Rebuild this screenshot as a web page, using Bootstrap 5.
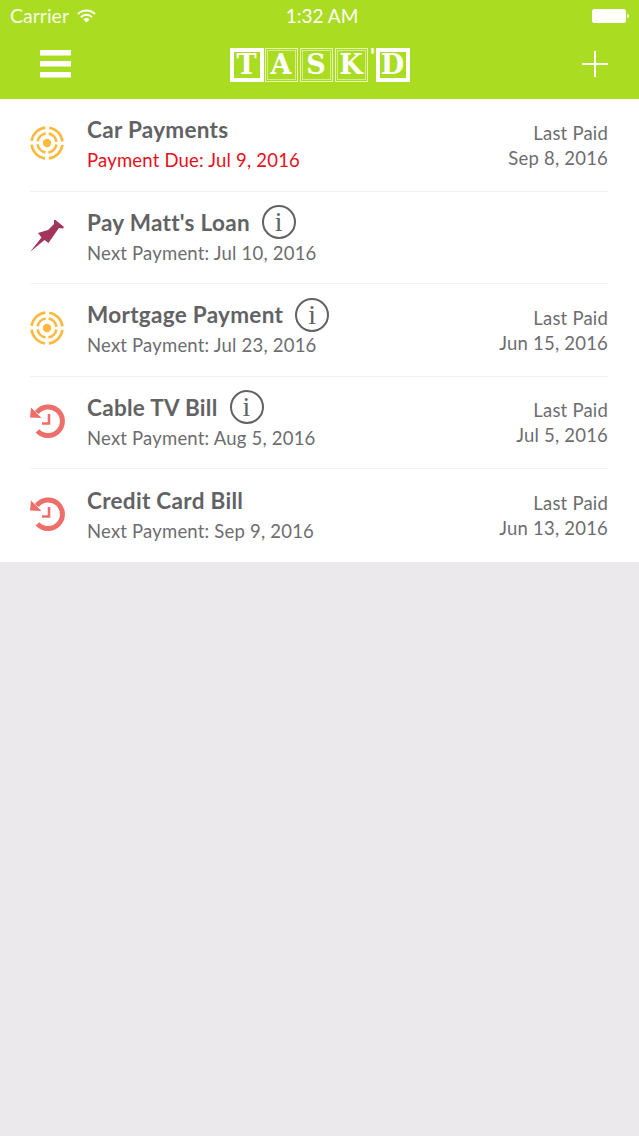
<!DOCTYPE html>
<html lang="en">
<head>
  <meta charset="UTF-8">
  <title>Task'd</title>
  <link href="https://cdn.jsdelivr.net/npm/bootstrap@5.3.0/dist/css/bootstrap.min.css" rel="stylesheet">
  <style>
    body { background: #ebe9eb; font-family: Lato, "Open Sans", sans-serif; color: #626265; min-height: 1136px; }
    .app-head { background: #aadc22; color: #fff; height: 99px; }
    .status-row { height: 32px; padding: 0 10px; font-size: 19px; }
    .status-row > div { flex: 1 1 0; }
    .status-time { text-align: center; padding-left: 5px; }
    .carrier { opacity: .9; font-size: 19.5px; }
    .bar-row { height: 67px; padding: 0 31px 4px 40px; }
    .bar-side { flex: 1 1 0; }
    .logo-box { display: flex; align-items: stretch; height: 34px; gap: 1px; margin: 2px 0 0 -9px; font-family: "DejaVu Serif", serif; font-weight: 700; color: #fff; }
    .tile { width: 33px; margin-right: 1px; border: 1px solid #e9f7b8; padding: 1px; overflow: hidden; }
    .tile span { display: flex; height: 100%; align-items: center; justify-content: center; border: 1px solid #d5ef8a; font-size: 27px; line-height: 1; }
    .tile-bold { width: 34px; padding: 0; border: 4px solid #fff; margin-right: 0; }
    .tile-bold span { border: 0; }
    .apos { width: 5px; font-size: 20px; line-height: 20px; margin-top: -2px; }
    .pay-list { background: #fff; height: 463px; --bs-list-group-color: #626265; }
    .pay-row { height: 92.5px; margin: 0 31px 0 30px; border-bottom: 1px solid #f2f2f3; background: transparent; padding: 0; }
    .pay-icon { width: 40px; margin: 0 20px 4px -3px; }
    .pay-body { padding-bottom: 4px; }
    .pay-title { font-size: 22.5px; font-weight: 700; line-height: 35px; height: 35px; letter-spacing: .3px; }
    .pay-sub { font-size: 18.5px; line-height: 26px; letter-spacing: .2px; color: #6d6d70; }
    .pay-due { color: #e8101c; }
    .pay-right { font-size: 18.5px; line-height: 25px; text-align: right; letter-spacing: .2px; padding-top: 2px; color: #6d6d70; }
    .info-dot { width: 34px; height: 34px; border: 2px solid #626265; border-radius: 50%; margin-left: 12px; font-family: "Liberation Serif", serif; font-weight: 400; font-size: 28px; line-height: 30px; text-align: center; }
  </style>
</head>
<body>

  <!-- Header -->
  <header class="app-head">
    <div class="status-row d-flex align-items-center">
      <div class="d-flex align-items-center gap-2">
        <span class="carrier">Carrier</span>
        <svg width="19" height="14" viewBox="0 0 19 14" fill="none" stroke="#fff" stroke-width="2">
          <path d="M1 5a12 12 0 0 1 17 0"/>
          <path d="M4 8.2a7.6 7.6 0 0 1 11 0"/>
          <path d="M9.5 13.5l-3-3a4.3 4.3 0 0 1 6 0z" fill="#fff" stroke="none"/>
        </svg>
      </div>
      <div class="status-time">1:32 AM</div>
      <div class="d-flex justify-content-end">
        <svg width="37" height="16" viewBox="0 0 37 16">
          <rect x="0" y="1" width="34" height="14" rx="2.5" fill="#fff"/>
          <rect x="35" y="6" width="2" height="4" rx="1" fill="#fff" opacity=".8"/>
        </svg>
      </div>
    </div>
    <nav class="bar-row d-flex align-items-center">
      <div class="bar-side">
        <svg class="d-block" width="31" height="28" viewBox="0 0 31 28" fill="#fff">
          <rect y="0" width="31" height="5.5"/>
          <rect y="11" width="31" height="5.5"/>
          <rect y="22" width="31" height="5.5"/>
        </svg>
      </div>
      <div class="logo-box">
        <div class="tile tile-bold"><span>T</span></div>
        <div class="tile"><span>A</span></div>
        <div class="tile"><span>S</span></div>
        <div class="tile"><span>K</span></div>
        <div class="apos">'</div>
        <div class="tile tile-bold"><span>D</span></div>
      </div>
      <div class="bar-side d-flex justify-content-end">
        <svg width="26" height="26" viewBox="0 0 26 26" stroke="#fff" stroke-width="2">
          <path d="M13 0v26M0 13h26"/>
        </svg>
      </div>
    </nav>
  </header>

  <!-- Icons -->
  <svg width="0" height="0" class="position-absolute">
    <defs>
      <symbol id="ico-target" viewBox="0 0 40 40">
        <g fill="none" stroke="#fbb93e" stroke-width="2.6">
          <circle cx="20" cy="20" r="15.5" stroke-dasharray="20.3 4" stroke-dashoffset="-2"/>
          <circle cx="20" cy="20" r="9.5" stroke-dasharray="11.9 3" stroke-dashoffset="-1.5"/>
        </g>
        <circle cx="20" cy="20" r="4.2" fill="#fbb93e"/>
      </symbol>
      <symbol id="ico-pin" viewBox="0 0 40 40">
        <path fill="#a3345c" d="M3 37L14.500 22.500 11 18 21 15 27 9 27 5 28.500 5 37 12 36 13.500 32 13 27 20 21.500 28 17.500 25z"/>
      </symbol>
      <symbol id="ico-history" viewBox="0 0 40 40">
        <path fill="none" stroke="#ee6e6a" stroke-width="5" d="M9.800 12.500A14.300 14.300 0 1 1 10.500 30.800"/>
        <path fill="#ee6e6a" d="M4 7.500L14.500 18 3 17.500z"/>
        <path fill="none" stroke="#ee6e6a" stroke-width="2.600" d="M22 14v9.500h-7"/>
      </symbol>
    </defs>
  </svg>

  <!-- Payments -->
  <ul class="list-group list-group-flush pay-list">
    <li class="list-group-item pay-row d-flex align-items-center">
      <svg class="pay-icon" height="40"><use href="#ico-target"/></svg>
      <div class="pay-body flex-grow-1">
        <div class="pay-title d-flex align-items-center">Car Payments</div>
        <div class="pay-sub pay-due">Payment Due: Jul 9, 2016</div>
      </div>
      <div class="pay-right">Last Paid<br>Sep 8, 2016</div>
    </li>
    <li class="list-group-item pay-row d-flex align-items-center">
      <svg class="pay-icon" height="40"><use href="#ico-pin"/></svg>
      <div class="pay-body flex-grow-1">
        <div class="pay-title d-flex align-items-center">Pay Matt's Loan<span class="info-dot">i</span></div>
        <div class="pay-sub">Next Payment: Jul 10, 2016</div>
      </div>
    </li>
    <li class="list-group-item pay-row d-flex align-items-center">
      <svg class="pay-icon" height="40"><use href="#ico-target"/></svg>
      <div class="pay-body flex-grow-1">
        <div class="pay-title d-flex align-items-center">Mortgage Payment<span class="info-dot">i</span></div>
        <div class="pay-sub">Next Payment: Jul 23, 2016</div>
      </div>
      <div class="pay-right">Last Paid<br>Jun 15, 2016</div>
    </li>
    <li class="list-group-item pay-row d-flex align-items-center">
      <svg class="pay-icon" height="40"><use href="#ico-history"/></svg>
      <div class="pay-body flex-grow-1">
        <div class="pay-title d-flex align-items-center">Cable TV Bill<span class="info-dot">i</span></div>
        <div class="pay-sub">Next Payment: Aug 5, 2016</div>
      </div>
      <div class="pay-right">Last Paid<br>Jul 5, 2016</div>
    </li>
    <li class="list-group-item pay-row d-flex align-items-center">
      <svg class="pay-icon" height="40"><use href="#ico-history"/></svg>
      <div class="pay-body flex-grow-1">
        <div class="pay-title d-flex align-items-center">Credit Card Bill</div>
        <div class="pay-sub">Next Payment: Sep 9, 2016</div>
      </div>
      <div class="pay-right">Last Paid<br>Jun 13, 2016</div>
    </li>
  </ul>

  <script src="https://cdn.jsdelivr.net/npm/bootstrap@5.3.0/dist/js/bootstrap.bundle.min.js"></script>
</body>
</html>
